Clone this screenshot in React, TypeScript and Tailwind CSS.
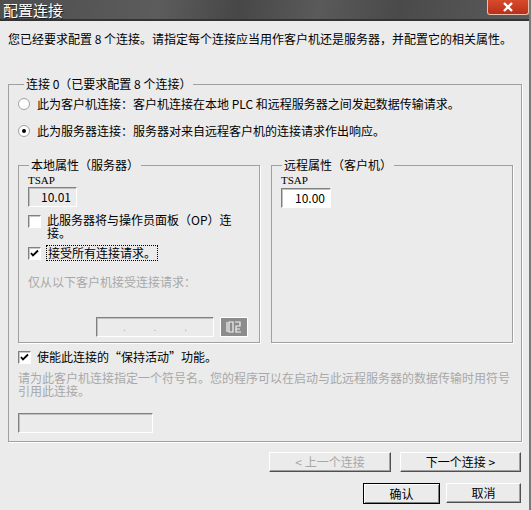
import React from 'react';

const Check: React.FC<{ checked?: boolean }> = ({ checked }) => (
  <span className="flex h-[13px] w-[13px] shrink-0 items-center justify-center border border-t-[#808080] border-l-[#808080] border-r-white border-b-white bg-white shadow-[inset_1px_1px_0_#c8c8c8]">
    {checked && (
      <svg width="9" height="9" viewBox="0 0 9 9">
        <path d="M1 4 L3 6.5 L8 1.5" stroke="#000" strokeWidth="1.8" fill="none" />
      </svg>
    )}
  </span>
);

const Radio: React.FC<{ checked?: boolean }> = ({ checked }) => (
  <span className="flex h-[12px] w-[12px] shrink-0 items-center justify-center rounded-full border border-[#a0a0a0] bg-white">
    {checked && <span className="h-[4px] w-[4px] rounded-full bg-black" />}
  </span>
);

const Btn: React.FC<{ label: string; w: string; disabled?: boolean; def?: boolean }> = ({ label, w, disabled, def }) => (
  <button
    className={
      'flex items-center justify-center text-[12px] ' +
      w +
      (def
        ? ' h-[21px] border border-black bg-[#ebebeb] shadow-[inset_1px_1px_0_#fff,inset_-1px_-1px_0_#808080]'
        : ' h-[20px] border border-t-white border-l-white border-r-[#505050] border-b-[#505050] bg-[#ebebeb] shadow-[inset_-1px_-1px_0_#a0a0a0]') +
      (disabled ? ' text-[#a8a8a8]' : ' text-black')
    }
  >
    {label}
  </button>
);

const Sunken: React.FC<{ className: string; children?: React.ReactNode }> = ({ className, children }) => (
  <div className={'flex items-center border border-t-[#808080] border-l-[#808080] border-r-white border-b-white shadow-[inset_1px_1px_0_#c0c0c0] ' + className}>
    {children}
  </div>
);

export default function App() {
  return (
    <div className="flex h-[510px] w-[531px] flex-col overflow-hidden border-r-2 border-r-[#7a7a7a] bg-[#ebebeb] font-['Noto_Sans_CJK_SC',sans-serif] text-[12px] leading-[14px] text-black">
      {/* title bar */}
      <div className="flex h-[21px] shrink-0 items-start justify-between border-b-2 border-b-[#333] bg-[linear-gradient(100deg,#4e4e4e_0%,#5c5c5c_30%,#474747_45%,#5a5a5a_60%,#4a4a4a_75%,#5b5b5b_100%)]">
        <span className="pl-[3px] pt-[1px] text-[15px] leading-[17px] text-white [text-shadow:1px_1px_0_#222]">配置连接</span>
        <span className="flex h-[15px] w-[42px] items-center justify-center rounded-b-[3px] border border-t-0 border-[#e8c0b0] bg-[linear-gradient(#d84a2c,#b8301a)]">
          <svg width="12" height="10" viewBox="0 0 12 10">
            <path d="M2 1 L10 9 M10 1 L2 9" stroke="#fff" strokeWidth="2.4" />
          </svg>
        </span>
      </div>

      <div className="flex flex-col pl-[8px] pr-[7px]">
        <p className="mt-[11px] whitespace-nowrap">您已经要求配置 8 个连接。请指定每个连接应当用作客户机还是服务器，并配置它的相关属性。</p>

        <fieldset className="mt-[31px] border border-[#a0a0a0] pb-[8px] pl-[9px] shadow-[1px_1px_0_#fff]">
          <legend className="ml-[6px] bg-[#ebebeb] px-[2px]">连接 0（已要求配置 8 个连接）</legend>

          <div className="mt-[6px] flex items-center gap-[7px] whitespace-nowrap">
            <Radio />
            <span>此为客户机连接：客户机连接在本地 PLC 和远程服务器之间发起数据传输请求。</span>
          </div>
          <div className="mt-[13px] flex items-center gap-[7px] whitespace-nowrap">
            <Radio checked />
            <span>此为服务器连接：服务器对来自远程客户机的连接请求作出响应。</span>
          </div>

          <div className="mt-[20px] flex gap-[11px]">
            <fieldset className="h-[185px] w-[242px] border border-[#a0a0a0] pl-[9px] shadow-[1px_1px_0_#fff]">
              <legend className="ml-[1px] bg-[#ebebeb] px-[2px]">本地属性（服务器）</legend>
              <div className="mt-[1px] font-['Liberation_Serif',serif] text-[11px]">TSAP</div>
              <Sunken className="h-[20px] w-[49px] justify-end bg-[#ebebeb] pr-[5px]">
                <span className="text-[12px]">10.01</span>
              </Sunken>
              <div className="mt-[6px] flex items-start gap-[6px] leading-[13px]">
                <span className="mt-[2px]">
                  <Check />
                </span>
                <span className="whitespace-nowrap">
                  此服务器将与操作员面板（OP）连
                  <br />
                  接。
                </span>
              </div>
              <div className="mt-[6px] flex items-center gap-[5px]">
                <Check checked />
                <span className="border border-dotted border-black px-[1px]">接受所有连接请求。</span>
              </div>
              <div className="mt-[14px] text-[#a8a8a8]">仅从以下客户机接受连接请求：</div>
              <div className="mt-[28px] flex gap-[6px] pl-[68px]">
                <Sunken className="h-[20px] w-[118px] justify-around bg-[#ebebeb] px-[12px] text-[10px] text-[#b0b0b0]">
                  <span>.</span>
                  <span>.</span>
                  <span>.</span>
                </Sunken>
                <span className="flex h-[20px] w-[28px] items-center justify-center border border-white bg-[#8c8c8c]">
                  <svg width="16" height="12" viewBox="0 0 16 12">
                    <path d="M1 1 V11 M3 1 H7 V11 H3 Z M9 1 H14 V5 H10 V11 H15 M10 8 H14" stroke="#f2f2f2" strokeWidth="1.2" fill="none" />
                  </svg>
                </span>
              </div>
            </fieldset>

            <fieldset className="h-[185px] w-[242px] border border-[#a0a0a0] pl-[9px] shadow-[1px_1px_0_#fff]">
              <legend className="ml-[1px] bg-[#ebebeb] px-[2px]">远程属性（客户机）</legend>
              <div className="mt-[1px] font-['Liberation_Serif',serif] text-[11px]">TSAP</div>
              <Sunken className="mt-[1px] h-[20px] w-[50px] justify-end bg-white pr-[5px]">
                <span className="text-[12px]">10.00</span>
              </Sunken>
            </fieldset>
          </div>

          <div className="mt-[7px] flex items-center gap-[6px]">
            <Check checked />
            <span>使能此连接的“保持活动”功能。</span>
          </div>
          <p className="mt-[7px] whitespace-nowrap leading-[13px] text-[#a8a8a8]">
            请为此客户机连接指定一个符号名。您的程序可以在启动与此远程服务器的数据传输时用符号
            <br />
            引用此连接。
          </p>
          <Sunken className="mt-[16px] h-[20px] w-[135px] bg-[#ebebeb]" />
        </fieldset>

        <div className="mt-[10px] flex justify-end gap-[9px] pr-[1px]">
          <Btn label="< 上一个连接" w="w-[122px]" disabled />
          <Btn label="下一个连接 >" w="w-[121px]" />
        </div>
        <div className="mt-[11px] flex justify-end gap-[6px] pr-[1px]">
          <Btn label="确认" w="w-[77px]" def />
          <Btn label="取消" w="w-[75px]" />
        </div>
      </div>
    </div>
  );
}
